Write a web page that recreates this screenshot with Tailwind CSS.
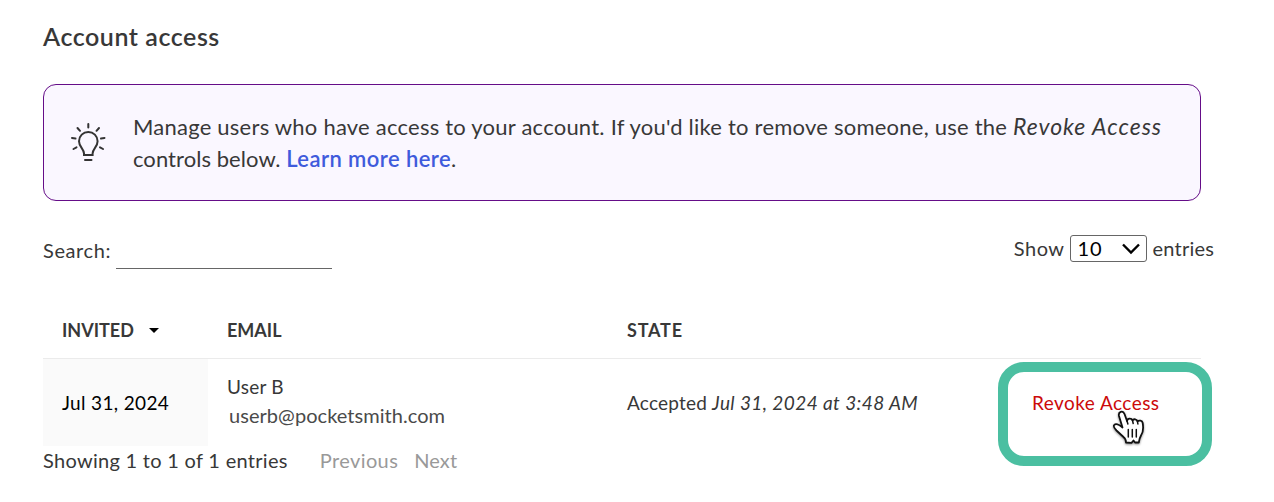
<!DOCTYPE html>
<html lang="en">
<head>
    <meta charset="UTF-8">
    <meta name="viewport" content="width=device-width, initial-scale=1.0">
    <title>Account access</title>
    <script src="https://cdn.jsdelivr.net/npm/@tailwindcss/browser@4"></script>
</head>
<body class="bg-white text-[#383838] font-['Lato',sans-serif] whitespace-nowrap">
    <main class="relative w-[1274px] h-[502px] overflow-hidden pl-[43px] pt-5">
        <h1 class="text-[25px] leading-8 font-semibold tracking-[0.55px]">Account access</h1>

        <!-- Info box -->
        <div class="mt-8 w-[1158px] h-[117px] flex items-center border border-[#650d88] rounded-[13px] bg-[#faf7ff] pl-[26px]">
            <svg class="w-9 h-10 mb-[2px] shrink-0" viewBox="0 0 36 40" fill="none" stroke="#333" stroke-width="2" stroke-linecap="round">
                <path d="M14 33v-1.500c0-4.500-5-6.500-5-12.300a9.300 9.300 0 0 1 18.600 0c0 5.800-5 7.800-5 12.300V33z"/>
                <path d="M15 38h6.500M18.300 2v3.500M7.500 6l2.500 2.800M29 6l-2.500 2.800M2 16l3.500.5M34.500 16l-3.500.5M3.500 27l3-1.700M33 27l-3-1.700"/>
            </svg>
            <p class="ml-[27px] text-[22px] leading-8">
                <span class="tracking-[0.23px]">Manage users who have access to your account. If you'd like to remove someone, use the </span><em class="text-[23px] leading-6 tracking-[0.98px]">Revoke Access</em><br>
                <span class="tracking-[0.06px]">controls below. </span><a href="#" class="font-semibold tracking-[0.42px] text-[#3f5bdc]">Learn more here</a>.
            </p>
        </div>

        <!-- Table controls -->
        <div class="mt-[33px] flex justify-between w-[1171px] text-[20px]">
            <label class="flex leading-8">
                <span class="w-[68px] tracking-[0.6px]">Search:</span>
                <input type="text" class="ml-[5px] w-[216px] h-[35px] border-b border-[#666] outline-none">
            </label>
            <div class="flex leading-7">
                <span class="tracking-[0.5px]">Show</span>
                <span class="mt-px ml-[5px] mr-[6px] w-[77px] h-[27px] flex items-center justify-between border border-[#666] rounded-[3px] pl-[7px] pr-[6px] text-black tracking-[0.8px]">
                    <span class="mb-[2px]">10</span>
                    <svg class="w-[18px] h-3" viewBox="0 0 18 12" fill="none" stroke="currentColor" stroke-width="2.400"><path d="M1 1.500l8 8 8-8"/></svg>
                </span>
                <span class="tracking-[0.2px]">entries</span>
            </div>
        </div>

        <table class="mt-[33px] w-[1158px] table-fixed text-left">
            <thead>
                <tr class="h-[56px] border-b border-[#ebebeb] text-[18px]">
                    <th class="w-[165px] pl-[19px] pt-[2px] pb-0">INVITED<svg class="inline ml-[15px] mb-1 w-[10px] h-[5px] fill-black" viewBox="0 0 10 5"><path d="M0 0h10L5 5z"/></svg></th>
                    <th class="w-[400px] pl-[19px] pt-[2px] pb-0">EMAIL</th>
                    <th class="w-[400px] pl-[19px] pt-[2px] pb-0 tracking-[0.8px]">STATE</th>
                    <th></th>
                </tr>
            </thead>
            <tbody>
                <tr class="h-[88px] text-[19px]">
                    <td class="bg-[#fafafa] pl-[19px] pt-[2px] text-black tracking-[0.35px]">Jul 31, 2024</td>
                    <td class="pl-[19px] pb-[2px] leading-7">
                        <div class="tracking-[0.2px]">User B</div>
                        <div class="pl-[2px] text-[20px] tracking-[0.05px] text-[#4a4a4a]">userb@pocketsmith.com</div>
                    </td>
                    <td class="pl-[19px] pt-[2px]"><span class="tracking-[0.2px]">Accepted </span><em class="tracking-[0.42px]">Jul 31, 2024 at 3:48 AM</em></td>
                    <td class="pl-[24px] pt-[2px] tracking-[0.45px] text-[#cc0a0a]"><a href="#">Revoke Access</a></td>
                </tr>
            </tbody>
        </table>

        <div class="-mt-[2px] flex text-[20px] leading-8">
            <span class="tracking-[0.29px]">Showing 1 to 1 of 1 entries</span>
            <span class="ml-8 text-[#999] tracking-[0.4px]">Previous</span>
            <span class="ml-4 text-[#999] tracking-[0.1px]">Next</span>
        </div>

        <!-- Highlight and pointer over the revoke link -->
        <div class="absolute left-[998px] top-[362px] w-[214px] h-[104px] border-[10px] border-[#4bbfa1] rounded-[26px]"></div>
        <svg class="absolute left-[1110px] top-[408px] w-[38px] h-[42px] drop-shadow-[0_1px_1px_rgba(0,0,0,0.45)]" viewBox="0 0 38 42" fill="#fff" stroke="#111" stroke-width="1.800" stroke-linejoin="round" stroke-linecap="round">
            <path d="M12.500 19.500L9 8C8 3.500 13 2 14.500 6L17 13C17.500 10 21.500 10 22.500 12.500C23.500 10.500 27 11 27.500 13.500C29 11.800 32.300 12.500 32.700 15C33.500 20 33.500 24 31 27.500C29.500 30 29.200 32 28.800 34.500L25 34.500L23.500 32.500L21.500 34.800L16 34.500C16 32 15.500 30.500 13.500 29L6.500 22.500C4 20 3 18.500 4.200 17C6 15 9 16.500 12.500 19.500z"/>
            <path d="M18.300 21.500v7.500M22.300 21.500v7.500M26.300 21.500v7.500M22.500 12.500l.7 3M27.500 13.500l.4 2.500M17 13l.9 3" stroke-width="1.500"/>
        </svg>
    </main>
</body>
</html>
